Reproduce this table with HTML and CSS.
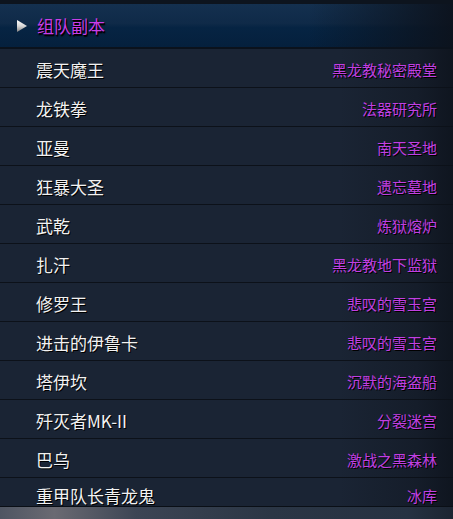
FILE: index.html
```html
<!DOCTYPE html>
<html lang="zh">
<head>
<meta charset="utf-8">
<link rel="stylesheet" href="styles.css">
</head>
<body>
<div class="panel">
  <div class="topband"></div>
  <div class="header">
    <svg class="arrow" width="12" height="12" viewBox="0 0 12 12">
      <defs>
        <linearGradient id="g" x1="0" y1="0" x2="0" y2="1">
          <stop offset="0" stop-color="#ffffff"/>
          <stop offset="0.5" stop-color="#d8d8d8"/>
          <stop offset="1" stop-color="#808080"/>
        </linearGradient>
      </defs>
      <polygon points="1,0 11,6 1,12" fill="url(#g)"/>
    </svg>
    <span class="title">组队副本</span>
  </div>
  <ul class="list">
    <li class="row"><span class="name">震天魔王</span><span class="place">黑龙教秘密殿堂</span></li>
    <li class="row"><span class="name">龙铁拳</span><span class="place">法器研究所</span></li>
    <li class="row"><span class="name">亚曼</span><span class="place">南天圣地</span></li>
    <li class="row"><span class="name">狂暴大圣</span><span class="place">遗忘墓地</span></li>
    <li class="row"><span class="name">武乾</span><span class="place">炼狱熔炉</span></li>
    <li class="row"><span class="name">扎汗</span><span class="place">黑龙教地下监狱</span></li>
    <li class="row"><span class="name">修罗王</span><span class="place">悲叹的雪玉宫</span></li>
    <li class="row"><span class="name">进击的伊鲁卡</span><span class="place">悲叹的雪玉宫</span></li>
    <li class="row"><span class="name">塔伊坎</span><span class="place">沉默的海盗船</span></li>
    <li class="row"><span class="name">歼灭者MK-II</span><span class="place">分裂迷宫</span></li>
    <li class="row"><span class="name">巴乌</span><span class="place">激战之黑森林</span></li>
    <li class="row last"><span class="name">重甲队长青龙鬼</span><span class="place">冰库</span></li>
  </ul>
  <div class="scene"></div>
</div>
</body>
</html>
```
FILE: styles.css
```css
* { box-sizing: border-box; }
html, body {
  margin: 0;
  padding: 0;
  background: #0c121b;
  width: 453px;
  height: 519px;
  overflow: hidden;
  font-family: "Noto Sans CJK SC", "Noto Sans", sans-serif;
}
.panel {
  width: 453px;
  height: 519px;
  display: flex;
  flex-direction: column;
}
.topband {
  height: 4px;
  background: #0d141e;
}
.header {
  height: 45px;
  display: flex;
  align-items: center;
  padding-left: 16px;
  gap: 9px;
  background:
    linear-gradient(to right, rgba(12,18,28,0) 0%, rgba(12,18,28,0) 68%, rgba(12,18,28,0.6) 88%, rgba(12,18,28,0.95) 100%),
    linear-gradient(to bottom, #14304f 0%, #0f2a48 45%, #062443 55%, #05203d 100%);
  border-bottom: 2px solid #0b121c;
}
.arrow { flex: none; margin-top: 1px; }
.title {
  color: #c83ee8;
  font-size: 17px;
  line-height: 1;
  text-shadow: 1px 1px 0 #000, 1px 2px 1px #000;
}
.list {
  list-style: none;
  margin: 0;
  padding: 0;
  background: linear-gradient(to right, #1a2434 0%, #1a2434 75%, #151d2a 92%, #0f151f 100%);
}
.row {
  height: 39px;
  display: flex;
  align-items: center;
  justify-content: space-between;
  padding: 3px 16px 0 36px;
  border-bottom: 1px solid #0c1119;
}
.row.last { height: 29px; align-items: flex-start; padding-top: 9px; border-bottom: 1px solid #0a0f16; }
.name {
  color: #f2f2f2;
  font-size: 17px;
  line-height: 1;
  text-shadow: 1px 1px 0 #000;
}
.place {
  color: #c040e2;
  font-size: 15px;
  line-height: 1;
  text-shadow: 1px 1px 0 #000;
}
.last .place { margin-top: 1px; }
.scene {
  flex: 1;
  background: linear-gradient(to right, #4e5562 0%, #6a6a72 12%, #3c4554 30%, #2b3645 60%, #263242 90%, #1c2532 100%);
}
```
